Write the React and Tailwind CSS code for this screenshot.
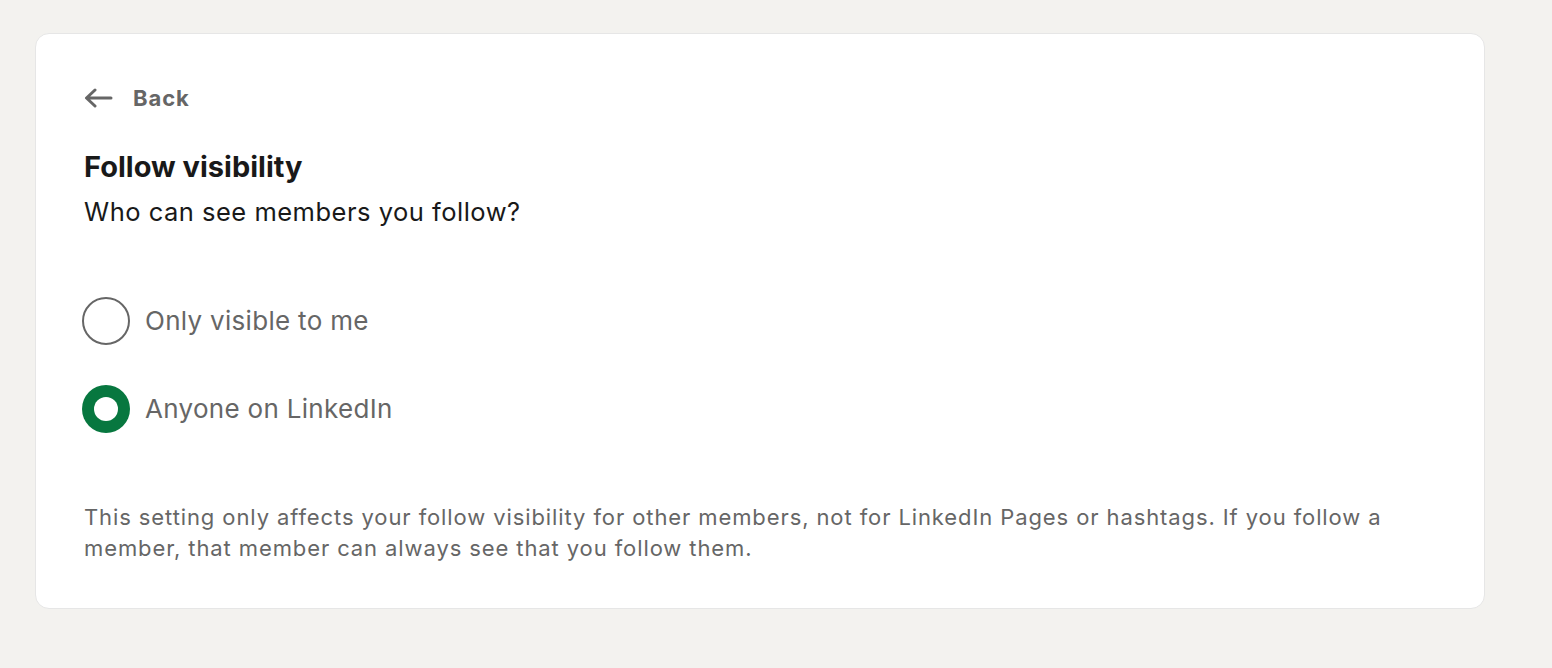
import React, { useState } from "react";

function Radio({ checked, label, onClick }) {
  return (
    <button type="button" onClick={onClick} className="flex items-center text-left ml-[-2px]">
      {checked ? (
        <span className="w-[48px] h-[48px] rounded-full bg-[#07773f] flex items-center justify-center shrink-0">
          <span className="w-[24px] h-[24px] rounded-full bg-white" />
        </span>
      ) : (
        <span className="w-[48px] h-[48px] rounded-full border-2 border-[#666666] bg-white shrink-0" />
      )}
      <span className="ml-[15px] text-[26px] tracking-[0.3px] text-[#666666] leading-[32px]">{label}</span>
    </button>
  );
}

export default function App() {
  const [sel, setSel] = useState(1);
  return (
    <div
      className="w-[1552px] h-[668px] bg-[#f3f2ef] pt-[33px] pl-[35px]"
      style={{ fontFamily: "Inter, 'Noto Sans', sans-serif" }}
    >
      <div className="w-[1450px] h-[576px] bg-white border border-[#e6e6e6] rounded-[14px] px-[48px] pt-[48px]">
        <button type="button" className="flex items-center h-[32px] text-[#666666]">
          <svg width="30" height="20" viewBox="0 0 30 20" fill="none" className="ml-[-1px]">
            <path d="M28 10H4M12 2L3.5 10L12 18" stroke="#666666" strokeWidth="3" strokeLinecap="round" strokeLinejoin="round" />
          </svg>
          <span className="ml-[20px] text-[22px] font-bold tracking-[0.9px]">Back</span>
        </button>
        <h1 className="mt-[36px] text-[29px] leading-[34px] font-bold text-[#191919]">
          Follow visibility
        </h1>
        <p className="mt-[13px] text-[25.5px] tracking-[0.5px] leading-[30px] text-[#191919]">
          Who can see members you follow?
        </p>
        <div className="mt-[70px] flex flex-col gap-[40px]">
          <Radio checked={sel === 0} label="Only visible to me" onClick={() => setSel(0)} />
          <Radio checked={sel === 1} label="Anyone on LinkedIn" onClick={() => setSel(1)} />
        </div>
        <p className="mt-[69px] text-[22px] tracking-[0.9px] leading-[31px] text-[#666666] w-[1330px]">
          This setting only affects your follow visibility for other members, not for LinkedIn Pages or hashtags. If you follow a member, that member can always see that you follow them.
        </p>
      </div>
    </div>
  );
}
